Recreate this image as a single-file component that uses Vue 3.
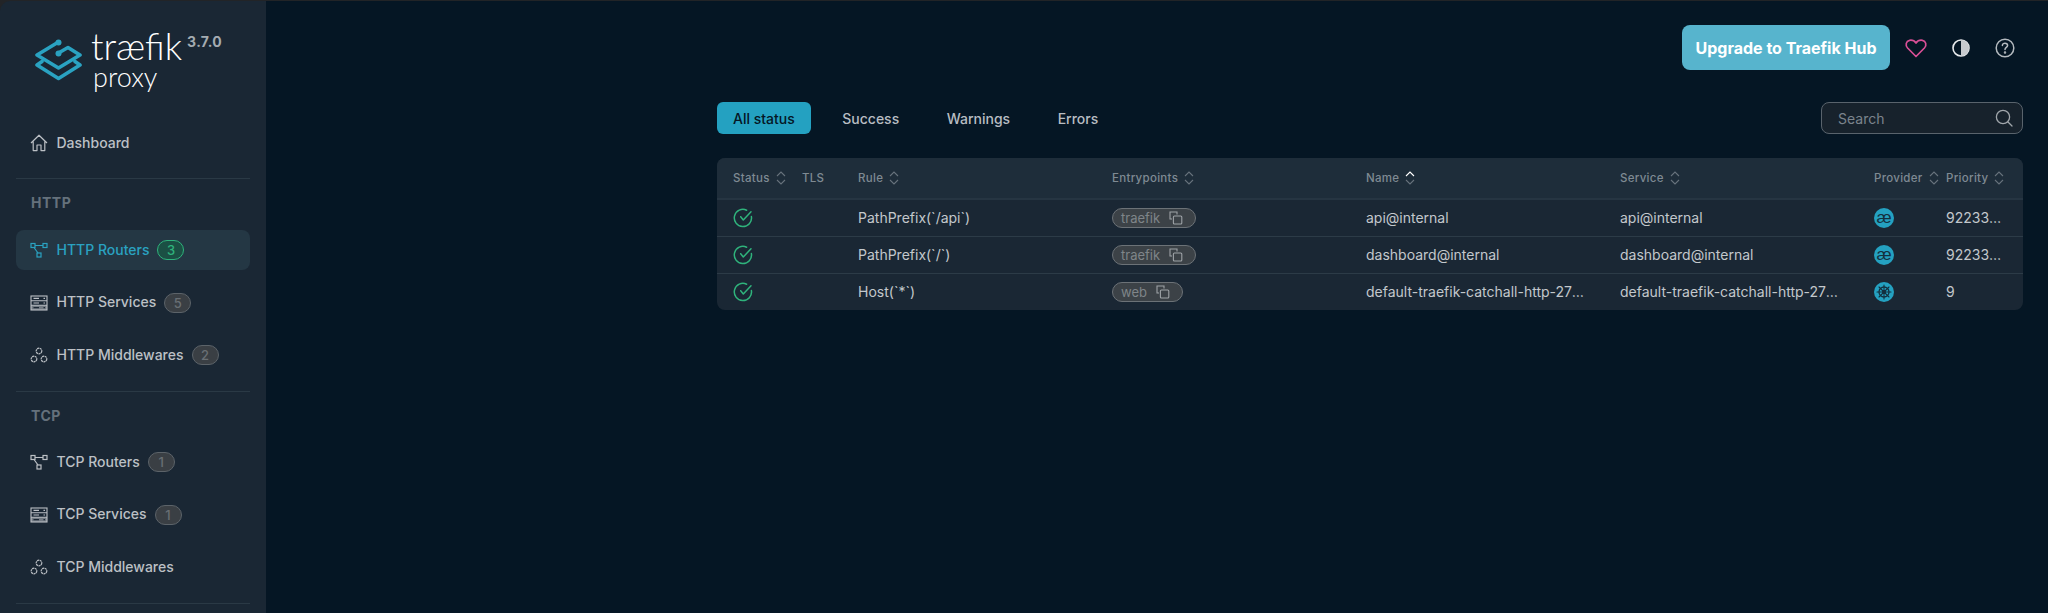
<script setup>
const httpItems = [
  { label: 'HTTP Routers', icon: 'routers', count: 3, active: true },
  { label: 'HTTP Services', icon: 'services', count: 5 },
  { label: 'HTTP Middlewares', icon: 'middlewares', count: 2 }
]

const tcpItems = [
  { label: 'TCP Routers', icon: 'routers', count: 1 },
  { label: 'TCP Services', icon: 'services', count: 1 },
  { label: 'TCP Middlewares', icon: 'middlewares' }
]

const navGroups = [
  { title: 'HTTP', items: httpItems },
  { title: 'TCP', items: tcpItems }
]

const tabs = ['All status', 'Success', 'Warnings', 'Errors']

const columns = [
  { label: 'Status', sort: true },
  { label: 'TLS' },
  { label: 'Rule', sort: true },
  { label: 'Entrypoints', sort: true },
  { label: 'Name', sort: true, sorted: true },
  { label: 'Service', sort: true },
  { label: 'Provider', sort: true },
  { label: 'Priority', sort: true }
]

const rows = [
  { rule: 'PathPrefix(`/api`)', entry: 'traefik', name: 'api@internal', service: 'api@internal', provider: 'internal', priority: '9223372036854775806' },
  { rule: 'PathPrefix(`/`)', entry: 'traefik', name: 'dashboard@internal', service: 'dashboard@internal', provider: 'internal', priority: '9223372036854775805' },
  { rule: 'Host(`*`)', entry: 'web', name: 'default-traefik-catchall-http-2769c9a7e4@kubernetes', service: 'default-traefik-catchall-http-2769c9a7e4@kubernetes', provider: 'kubernetes', priority: '9' }
]
</script>

<template>
  <div class="page">
    <aside class="sidebar">
      <div class="brand">
        <svg class="brand-mark" viewBox="0 0 47 42" fill="none" stroke="#2aa2c1" stroke-width="3.6" stroke-linejoin="round" stroke-linecap="round">
          <path d="M23.5 3 L2 16 L23.5 29 L45 16 L33 8.5 L23.5 14" />
          <path d="M7 22.5 L2 26 L23.5 39.5 L45 26 L40 22.5" />
          <circle cx="23.5" cy="3.6" r="3" fill="#2aa2c1" stroke="none" />
          <circle cx="23.5" cy="14.4" r="3" fill="#2aa2c1" stroke="none" />
        </svg>
        <div class="brand-name">
          <span class="brand-top">træfik</span>
          <span class="brand-sub">proxy</span>
        </div>
        <span class="brand-version">3.7.0</span>
      </div>

      <a class="nav-item">
        <svg class="nav-icon" viewBox="0 0 18 18" fill="none" stroke="currentColor" stroke-width="1.2" stroke-linejoin="round">
          <path d="M1 9 L9 1.2 L17 9 M3.2 7.4 V16.6 H7 V11 H11 V16.6 H14.8 V7.4" />
        </svg>
        <span class="nav-label">Dashboard</span>
      </a>

      <section v-for="group in navGroups" :key="group.title" class="nav-group">
        <h3 class="nav-title">{{ group.title }}</h3>
        <div class="nav-list">
          <a v-for="item in group.items" :key="item.label" class="nav-item" :class="{ active: item.active }">
            <svg v-if="item.icon === 'routers'" class="nav-icon" viewBox="0 0 18 18" fill="none" stroke="currentColor" stroke-width="1.2">
              <rect x="1" y="2.5" width="4" height="4" />
              <rect x="13" y="2.5" width="4" height="4" />
              <rect x="7" y="12" width="4" height="4" />
              <path d="M5 4.5 H13 M4 6.5 L8 12" />
            </svg>
            <svg v-else-if="item.icon === 'services'" class="nav-icon" viewBox="0 0 18 18" fill="none" stroke="currentColor" stroke-width="1.1">
              <rect x="1" y="2" width="16" height="14" />
              <rect x="1" y="11.4" width="16" height="4.6" fill="currentColor" fill-opacity="0.55" stroke="none" />
              <path d="M1 6.7 H17 M1 11.3 H17 M3.5 4.4 H9 M3.5 9 H9 M13.5 4.4 H15 M13.5 9 H15" />
              <path d="M3.5 13.6 H9 M13.5 13.6 H15" stroke="#1a2734" />
            </svg>
            <svg v-else class="nav-icon" viewBox="0 0 18 18" fill="none" stroke="currentColor" stroke-width="1.2" stroke-dasharray="2.2 0.5">
              <circle cx="9" cy="5" r="2.8" />
              <circle cx="4" cy="13" r="2.8" />
              <circle cx="14" cy="13" r="2.8" />
            </svg>
            <span class="nav-label">{{ item.label }}</span>
            <span v-if="item.count" class="badge" :class="{ 'badge-ok': item.active }">{{ item.count }}</span>
          </a>
        </div>
      </section>
      <div class="nav-end"></div>
    </aside>

    <main class="main">
      <div class="topbar">
        <button class="upgrade">Upgrade to Traefik Hub</button>
        <svg class="top-icon heart" viewBox="0 0 24 24" fill="none" stroke="#d94f96" stroke-width="1.7" stroke-linejoin="round">
          <path d="M12 20.5 L3.6 12 C1 9.2 2 5 5.6 4.3 C8 3.9 10.6 5 12 7 C13.4 5 16 3.9 18.4 4.3 C22 5 23 9.2 20.4 12 Z" />
        </svg>
        <svg class="top-icon" viewBox="0 0 24 24" fill="none">
          <circle cx="12" cy="12" r="8" stroke="#e8eaec" stroke-width="1.6" />
          <path d="M12 4 A8 8 0 0 1 12 20 Z" fill="#c8cbcf" />
        </svg>
        <svg class="top-icon" viewBox="0 0 24 24" fill="none" stroke="#b5babf" stroke-width="1.5" stroke-linecap="round">
          <circle cx="12" cy="12" r="8.8" />
          <path d="M9.4 9.6 C9.4 7.9 10.6 7.2 12 7.2 C13.5 7.2 14.6 8.1 14.6 9.5 C14.6 11.4 12 11.5 12 13.6" />
          <circle cx="12" cy="16.4" r="0.5" />
        </svg>
      </div>

      <div class="content">
        <div class="filters">
          <div class="tabs">
            <button v-for="(tab, i) in tabs" :key="tab" class="tab" :class="{ selected: i === 0 }">{{ tab }}</button>
          </div>
          <label class="search">
            <input class="search-input" placeholder="Search" />
            <svg class="search-icon" viewBox="0 0 18 18" fill="none" stroke="#a0a6ab" stroke-width="1.3" stroke-linecap="round">
              <circle cx="8" cy="8" r="6.6" />
              <path d="M13 13 L17 17" />
            </svg>
          </label>
        </div>

        <div class="table">
          <div class="table-row table-head">
            <div v-for="col in columns" :key="col.label" class="cell head-cell">
              <span>{{ col.label }}</span>
              <svg v-if="col.sort" class="sort-icon" viewBox="0 0 10 14" fill="none" stroke-width="1.1">
                <path d="M1 5 L5 1 L9 5" :stroke="col.sorted ? '#ffffff' : '#66717b'" />
                <path d="M1 9 L5 13 L9 9" stroke="#66717b" />
              </svg>
            </div>
          </div>

          <div v-for="row in rows" :key="row.name" class="table-row body-row">
            <div class="cell">
              <svg class="status-icon" viewBox="0 0 20 20" fill="none" stroke="#2fb37c" stroke-width="1.5" stroke-linecap="round" stroke-linejoin="round">
                <path d="M18.4 8.6 A8.6 8.6 0 1 1 13.6 2.2" />
                <path d="M7.7 8.7 L10.3 12 L18 3.7" />
              </svg>
            </div>
            <div class="cell"></div>
            <div class="cell"><span class="truncate">{{ row.rule }}</span></div>
            <div class="cell">
              <span class="chip">
                <span>{{ row.entry }}</span>
                <svg class="copy-icon" viewBox="0 0 14 14" fill="none" stroke="#9ea3a7" stroke-width="1.1">
                  <path d="M8 3.5 V1 H1 V8 H3" />
                  <rect x="4.4" y="5" width="8.4" height="8" rx="1" />
                </svg>
              </span>
            </div>
            <div class="cell"><span class="truncate">{{ row.name }}</span></div>
            <div class="cell"><span class="truncate">{{ row.service }}</span></div>
            <div class="cell">
              <span class="provider">
                <span v-if="row.provider === 'internal'" class="provider-glyph">æ</span>
                <svg v-else viewBox="0 0 20 20" class="helm" fill="none" stroke="#14303f" stroke-width="1.1" stroke-linecap="round">
                  <path d="M10 3 L10 17 M3 10 L17 10 M5 5 L15 15 M15 5 L5 15" />
                  <circle cx="10" cy="10" r="5" stroke-width="1.3" />
                  <circle cx="10" cy="10" r="1.4" fill="#14303f" />
                </svg>
              </span>
            </div>
            <div class="cell"><span class="truncate">{{ row.priority }}</span></div>
          </div>
        </div>
      </div>
    </main>
  </div>
</template>

<style>
html,
body {
  margin: 0;
  height: 100%;
  overflow: hidden;
  background: #222427;
}
</style>

<style scoped>
.page {
  display: flex;
  height: 613px;
  padding-top: 1px;
  box-sizing: border-box;
  background: #222427;
  font-family: Inter, "Liberation Sans", sans-serif;
  overflow: hidden;
}

.sidebar {
  width: 266px;
  flex-shrink: 0;
  box-sizing: border-box;
  padding: 0 16px;
  background: #1a2734;
  border-top-left-radius: 10px;
  overflow: hidden;
}

.brand {
  display: flex;
  height: 122px;
  padding-left: 19px;
  box-sizing: border-box;
  position: relative;
}

.brand-mark {
  width: 47px;
  height: 42px;
  margin-top: 38px;
}

.brand-name {
  display: flex;
  flex-direction: column;
  margin-left: 9px;
  margin-top: 27px;
  color: #ffffff;
  font-family: Lato, "Open Sans", sans-serif;
  font-weight: 300;
}

.brand-top {
  font-size: 36.5px;
  line-height: 36px;
}

.brand-sub {
  font-size: 27px;
  line-height: 26px;
  margin-left: 2px;
}

.brand-version {
  position: absolute;
  left: 171px;
  top: 33px;
  color: #a4abb1;
  font-size: 14px;
  font-weight: 700;
  line-height: 16px;
  letter-spacing: 0.4px;
}

.nav-item {
  display: flex;
  align-items: center;
  height: 40px;
  padding-left: 14px;
  border-radius: 8px;
  color: #bcc0c5;
  font-size: 14px;
  font-weight: 500;
}

.nav-item.active {
  background: #243744;
  color: #2aa2c1;
}

.nav-label {
  padding-bottom: 2px;
}

.nav-icon {
  width: 18px;
  height: 18px;
  margin-right: 8.5px;
  flex-shrink: 0;
}

.nav-group {
  margin-top: 16px;
  padding-top: 14px;
  border-top: 1px solid #2a3945;
}

.nav-item + .nav-group {
  margin-top: 15px;
}

.nav-title {
  margin: 0 0 16px;
  padding-left: 15px;
  color: #65717c;
  font-size: 14px;
  font-weight: 700;
  line-height: 20px;
  letter-spacing: 0.5px;
}

.nav-item + .nav-group .nav-title {
  margin-bottom: 17px;
}

.nav-list {
  display: flex;
  flex-direction: column;
  gap: 12.5px;
}

.nav-end {
  margin-top: 16px;
  border-top: 1px solid #2a3945;
}

.badge {
  display: flex;
  align-items: center;
  justify-content: center;
  width: 27px;
  height: 20px;
  margin-left: 8px;
  box-sizing: border-box;
  border: 1px solid #5c6369;
  border-radius: 10px;
  background: #3a3f44;
  color: #696f74;
  font-size: 13px;
}

.badge-ok {
  border-color: #2fb37c;
  background: #1b5044;
  color: #2fb37c;
}

.main {
  flex: 1;
  min-width: 0;
  background: #051624;
}

.topbar {
  display: flex;
  align-items: center;
  justify-content: flex-end;
  gap: 20px;
  height: 45px;
  margin-top: 24px;
  padding-right: 31px;
}

.upgrade {
  width: 208px;
  height: 45px;
  margin-right: -6px;
  border: none;
  border-radius: 8px;
  background: #57b4cd;
  color: #ffffff;
  font-family: inherit;
  font-size: 16px;
  font-weight: 700;
}

.top-icon {
  width: 24px;
  height: 24px;
}

.heart {
  margin-right: 1px;
}

.content {
  width: 1306px;
  margin: 32px 25px 0 auto;
}

.filters {
  display: flex;
  justify-content: space-between;
  margin-bottom: 24px;
}

.tabs {
  display: flex;
  gap: 15.5px;
}

.tab {
  height: 32px;
  padding: 0 16px;
  border: none;
  border-radius: 6px;
  background: transparent;
  color: #b8bdc2;
  font-family: inherit;
  font-size: 14px;
  font-weight: 500;
}

.tab.selected {
  background: #24a1c1;
  color: #051624;
}

.search {
  display: flex;
  align-items: center;
  width: 202px;
  height: 32px;
  padding: 0 9px 0 14px;
  box-sizing: border-box;
  border: 1px solid #59636c;
  border-radius: 8px;
  background: #17222c;
}

.search-input {
  flex: 1;
  min-width: 0;
  border: none;
  outline: none;
  background: transparent;
  color: #ffffff;
  font-family: inherit;
  font-size: 14px;
}

.search-input::placeholder {
  color: #7b848c;
  opacity: 1;
}

.search-icon {
  width: 18px;
  height: 18px;
  flex-shrink: 0;
}

.table {
  border-radius: 8px;
  background: #1a2734;
  overflow: hidden;
}

.table-row {
  display: grid;
  grid-template-columns: 69px 56px 254px 254px 254px 254px 72px 93px;
}

.table-head {
  height: 42px;
  box-sizing: border-box;
  border-bottom: 2px solid #263542;
  background: #1e2d3a;
}

.body-row {
  height: 37px;
  box-sizing: border-box;
  border-bottom: 1px solid #2c3b47;
  color: #c3c8cc;
  font-size: 14px;
}

.body-row:last-child {
  height: 36px;
  border-bottom: none;
}

.cell {
  display: flex;
  align-items: center;
  min-width: 0;
  padding-left: 16px;
}

.head-cell {
  gap: 6px;
  color: #7f8a93;
  font-size: 11.5px;
  font-weight: 500;
  letter-spacing: 0.3px;
  white-space: nowrap;
}

.sort-icon {
  width: 10px;
  height: 14px;
  flex-shrink: 0;
}

.truncate {
  display: block;
  padding-right: 16px;
  padding-bottom: 2px;
  overflow: hidden;
  text-overflow: ellipsis;
  white-space: nowrap;
}

.status-icon {
  width: 20px;
  height: 20px;
}

.chip {
  display: inline-flex;
  align-items: center;
  gap: 9px;
  height: 20px;
  padding: 0 12px 0 8px;
  box-sizing: border-box;
  border: 1px solid #6c7277;
  border-radius: 10px;
  background: #3c4247;
  color: #7f8589;
  font-size: 13px;
}

.copy-icon {
  width: 14px;
  height: 14px;
}

.provider {
  display: flex;
  align-items: center;
  justify-content: center;
  width: 20px;
  height: 20px;
  border-radius: 50%;
  background: #24a1c1;
}

.provider-glyph {
  color: #14303f;
  font-family: "Liberation Sans", sans-serif;
  font-size: 17px;
  line-height: 18px;
}

.helm {
  width: 20px;
  height: 20px;
}
</style>
